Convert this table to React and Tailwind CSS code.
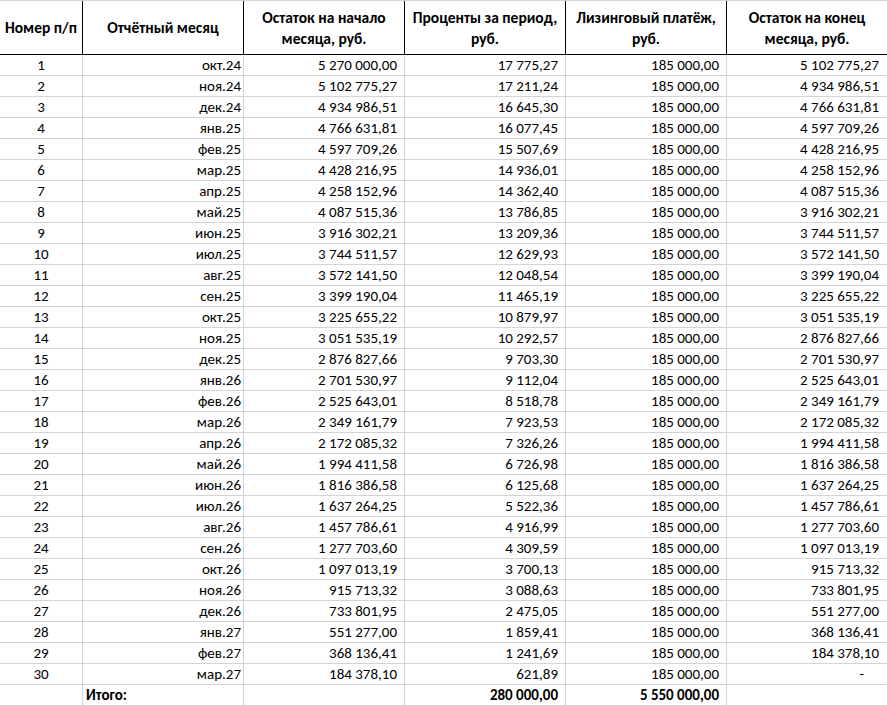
const rows = [
  ["окт.24", "5 270 000,00", "17 775,27", "5 102 775,27"],
  ["ноя.24", "5 102 775,27", "17 211,24", "4 934 986,51"],
  ["дек.24", "4 934 986,51", "16 645,30", "4 766 631,81"],
  ["янв.25", "4 766 631,81", "16 077,45", "4 597 709,26"],
  ["фев.25", "4 597 709,26", "15 507,69", "4 428 216,95"],
  ["мар.25", "4 428 216,95", "14 936,01", "4 258 152,96"],
  ["апр.25", "4 258 152,96", "14 362,40", "4 087 515,36"],
  ["май.25", "4 087 515,36", "13 786,85", "3 916 302,21"],
  ["июн.25", "3 916 302,21", "13 209,36", "3 744 511,57"],
  ["июл.25", "3 744 511,57", "12 629,93", "3 572 141,50"],
  ["авг.25", "3 572 141,50", "12 048,54", "3 399 190,04"],
  ["сен.25", "3 399 190,04", "11 465,19", "3 225 655,22"],
  ["окт.25", "3 225 655,22", "10 879,97", "3 051 535,19"],
  ["ноя.25", "3 051 535,19", "10 292,57", "2 876 827,66"],
  ["дек.25", "2 876 827,66", "9 703,30", "2 701 530,97"],
  ["янв.26", "2 701 530,97", "9 112,04", "2 525 643,01"],
  ["фев.26", "2 525 643,01", "8 518,78", "2 349 161,79"],
  ["мар.26", "2 349 161,79", "7 923,53", "2 172 085,32"],
  ["апр.26", "2 172 085,32", "7 326,26", "1 994 411,58"],
  ["май.26", "1 994 411,58", "6 726,98", "1 816 386,58"],
  ["июн.26", "1 816 386,58", "6 125,68", "1 637 264,25"],
  ["июл.26", "1 637 264,25", "5 522,36", "1 457 786,61"],
  ["авг.26", "1 457 786,61", "4 916,99", "1 277 703,60"],
  ["сен.26", "1 277 703,60", "4 309,59", "1 097 013,19"],
  ["окт.26", "1 097 013,19", "3 700,13", "915 713,32"],
  ["ноя.26", "915 713,32", "3 088,63", "733 801,95"],
  ["дек.26", "733 801,95", "2 475,05", "551 277,00"],
  ["янв.27", "551 277,00", "1 859,41", "368 136,41"],
  ["фев.27", "368 136,41", "1 241,69", "184 378,10"],
  ["мар.27", "184 378,10", "621,89", "-"],
];

const headers = [
  ["Номер п/п"],
  ["Отчётный месяц"],
  ["Остаток на начало", "месяца, руб."],
  ["Проценты за период,", "руб."],
  ["Лизинговый платёж,", "руб."],
  ["Остаток на конец", "месяца, руб."],
];

const cell = "h-[21px] border-b border-r border-[#d4d4d4] flex items-end pb-[1px] leading-[18px] whitespace-nowrap";

export default function App() {
  return (
    <div className="w-[887px] h-[705px] overflow-hidden bg-white text-black font-['Calibri','Carlito','Lato',sans-serif] text-[15px]">
      <div className="grid grid-cols-[83px_161px_161px_161px_161px_161px] border-t border-[#d4d4d4]">
        {headers.map((h, i) => (
          <div
            key={i}
            className="h-[54px] border-b border-r border-black flex flex-col items-center justify-center font-bold text-[15.5px] leading-[21px] whitespace-nowrap"
          >
            {h.map((line, j) => (
              <span key={j}>{line}</span>
            ))}
          </div>
        ))}
        {rows.map((r, i) => (
          <div key={i} className="contents">
            <div className={cell + " justify-center"}>{i + 1}</div>
            <div className={cell + " justify-end pr-[2px]"}>{r[0]}</div>
            <div className={cell + " justify-end pr-[7px]"}>{r[1]}</div>
            <div className={cell + " justify-end pr-[7px]"}>{r[2]}</div>
            <div className={cell + " justify-end pr-[7px]"}>185 000,00</div>
            <div className={cell + (r[3] === "-" ? " justify-end pr-[23px]" : " justify-end pr-[8px]")}>{r[3]}</div>
          </div>
        ))}
        <div className={cell}></div>
        <div className={cell + " justify-start pl-[3px] font-bold"}>Итого:</div>
        <div className={cell}></div>
        <div className={cell + " justify-end pr-[7px] font-bold"}>280 000,00</div>
        <div className={cell + " justify-end pr-[7px] font-bold"}>5 550 000,00</div>
        <div className={cell}></div>
      </div>
    </div>
  );
}
